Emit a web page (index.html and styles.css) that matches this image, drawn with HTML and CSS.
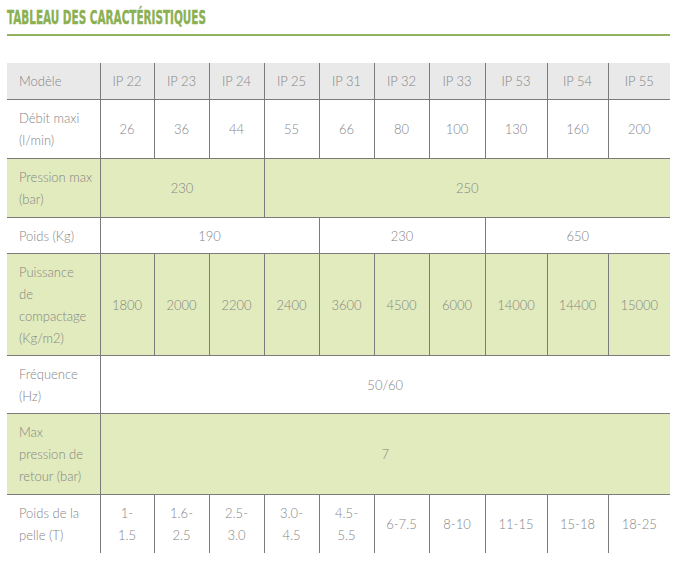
FILE: index.html
```html
<!DOCTYPE html>
<html lang="fr">
<head>
<meta charset="utf-8">
<title>Tableau des caractéristiques</title>
<link rel="stylesheet" href="styles.css">
</head>
<body>
<div class="page">
  <h2 class="title"><span class="title-text">TABLEAU DES CARACTÉRISTIQUES</span></h2>
  <div class="rule"></div>
  <table class="specs">
    <colgroup>
      <col class="c-label">
      <col class="c54"><col class="c55"><col class="c55"><col class="c55"><col class="c55"><col class="c55">
      <col class="c56"><col class="c62"><col class="c61"><col class="c62">
    </colgroup>
    <tr class="head">
      <td class="label">Modèle</td>
      <td>IP 22</td><td>IP 23</td><td>IP 24</td><td>IP 25</td><td>IP 31</td>
      <td>IP 32</td><td>IP 33</td><td>IP 53</td><td>IP 54</td><td>IP 55</td>
    </tr>
    <tr>
      <td class="label">Débit maxi (l/min)</td>
      <td>26</td><td>36</td><td>44</td><td>55</td><td>66</td>
      <td>80</td><td>100</td><td>130</td><td>160</td><td>200</td>
    </tr>
    <tr class="green">
      <td class="label">Pression max (bar)</td>
      <td colspan="3">230</td>
      <td colspan="7">250</td>
    </tr>
    <tr class="tight">
      <td class="label">Poids (Kg)</td>
      <td colspan="4">190</td>
      <td colspan="3">230</td>
      <td colspan="3">650</td>
    </tr>
    <tr class="green tight">
      <td class="label">Puissance<br>de<br>compactage<br>(Kg/m2)</td>
      <td>1800</td><td>2000</td><td>2200</td><td>2400</td><td>3600</td>
      <td>4500</td><td>6000</td><td>14000</td><td>14400</td><td>15000</td>
    </tr>
    <tr class="tight">
      <td class="label">Fréquence<br>(Hz)</td>
      <td colspan="10">50/60</td>
    </tr>
    <tr class="green">
      <td class="label">Max<br>pression de<br>retour (bar)</td>
      <td colspan="10">7</td>
    </tr>
    <tr class="last">
      <td class="label">Poids de la<br>pelle (T)</td>
      <td>1-<br>1.5</td><td>1.6-<br>2.5</td><td>2.5-<br>3.0</td><td>3.0-<br>4.5</td><td>4.5-<br>5.5</td>
      <td>6-7.5</td><td>8-10</td><td>11-15</td><td>15-18</td><td>18-25</td>
    </tr>
  </table>
</div>
</body>
</html>
```

FILE: styles.css
```css
html, body {
  margin: 0;
  padding: 0;
  background: #ffffff;
}

.page {
  padding: 0 4px 0 7px;
  font-family: Lato, "Open Sans", "DejaVu Sans", sans-serif;
}

.title {
  margin: 0;
  padding-top: 6px;
  height: 22px;
  font-family: "Liberation Sans Narrow", "DejaVu Sans Condensed", "Liberation Sans", sans-serif;
  font-weight: bold;
  font-size: 20px;
  line-height: 22px;
  color: #8bb052;
  white-space: nowrap;
}

.title-text {
  display: inline-block;
  transform: scaleX(0.58);
  transform-origin: left center;
  -webkit-text-stroke: 0.4px #8bb052;
}

.rule {
  margin-top: 6px;
  height: 2px;
  background: #92b25e;
}

.specs {
  margin-top: 27px;
  width: 663px;
  border-collapse: collapse;
  table-layout: fixed;
  font-size: 13px;
  font-weight: 300;
  color: #858585;
}

.c-label { width: 93px; }
.c54 { width: 54px; }
.c55 { width: 55px; }
.c56 { width: 56px; }
.c61 { width: 61px; }
.c62 { width: 62px; }

.specs td {
  border: 1px solid #7b7b7b;
  padding: 7px 2px;
  line-height: 22px;
  text-align: center;
  vertical-align: middle;
}

.specs tr.tight td {
  padding-bottom: 6px;
}

.specs td:first-child { border-left: none; }
.specs td:last-child { border-right: none; }
.specs tr:first-child td { border-top: none; }
.specs tr.last td { border-bottom: none; }

.specs td.label {
  text-align: left;
  padding-left: 12px;
}

.head td { background: #e9e9e9; }
.green td { background: #e2ebbd; }
```
